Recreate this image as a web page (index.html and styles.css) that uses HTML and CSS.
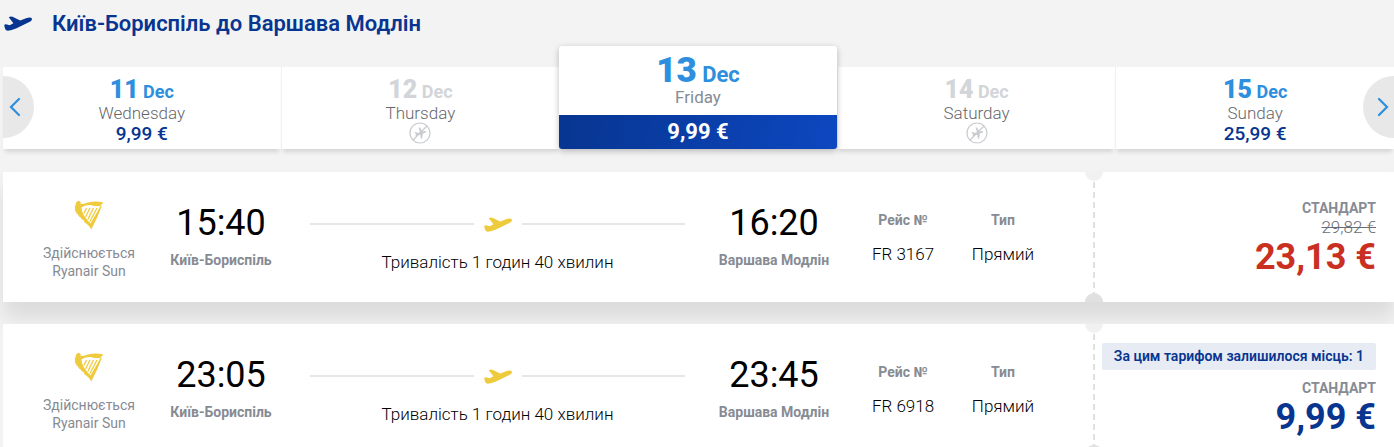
FILE: index.html
```html
<!DOCTYPE html>
<html lang="uk">

<head>
    <meta charset="UTF-8">
    <meta name="viewport" content="width=device-width, initial-scale=1.0">
    <title>Київ-Бориспіль до Варшава Модлін</title>
    <link rel="stylesheet" href="styles.css">
</head>

<body>

    <!-- shared icons -->
    <svg class="sprite" aria-hidden="true">
        <symbol id="plane" viewBox="0 0 28 15">
            <path d="M4.800 1.200 Q6.500 .2 8.500 .8 L16.200 4.600 L22.800 2 Q27 .8 28 2.700 Q28.200 4.800 24.800 6.300 L12 12.600 Q6.500 15 2.800 14.600 Q.9 14 .2 9 Q1.500 7.600 3 8.500 L5.700 9.200 L9.400 7.200 Z"/>
        </symbol>
        <symbol id="harp" viewBox="0 0 30 30">
            <path d="M2 3 Q2.500 .8 5 1 Q7.300 1.500 6.500 4 Q10 4 14 2.500 Q21 .3 29.500 2.500 Q28 3 28.500 4 Q27.500 4 27.500 5.200 Q26 5 26 6.300 Q20 6.300 16 5 Q11.500 5 7.600 7.300 Q7 14 16.500 23.500 L26.500 6 L27.800 6 Q24 17 17.300 29.500 Q15.500 25.500 11 22.500 Q9.500 21.500 9.800 20.300 Q6.500 19 6.700 17.500 Q4 16.500 4.300 14.800 Q1.500 13.500 2.300 12 Q0 10 1.200 8.500 Q0 6.500 1.400 5.500 Z"/>
            <path class="strings" d="M12.500 8 L9.800 13.500 M16 8 L11.600 17 M19.500 8 L13.800 19.500 M23 8 L15.800 21.800"/>
        </symbol>
        <symbol id="no-flight" viewBox="0 0 22 22">
            <g class="outline">
                <circle cx="11" cy="11" r="10"/>
                <path d="M18 4 L4 18"/>
            </g>
            <path d="M5.500 10.300 L7 10 L8.400 11 L11 10.300 L9.600 5.600 L11 5.400 L13.400 9.500 L16.500 9 Q18 9.200 16.800 10.400 L13.800 11.500 L13.200 16.500 L12 16.700 L11.200 12.600 L8.600 13 L7.300 14.300 L6.500 14.200 L7 12.200 Z"/>
        </symbol>
    </svg>

    <header class="route-title">
        <svg class="plane-icon"><use href="#plane"/></svg>
        <h1>Київ-Бориспіль до Варшава Модлін</h1>
    </header>

    <nav class="days">
        <button class="day">
            <span class="date"><b>11</b> Dec</span>
            <span class="weekday">Wednesday</span>
            <span class="day-price">9,99 €</span>
        </button>
        <button class="day disabled" disabled>
            <span class="date"><b>12</b> Dec</span>
            <span class="weekday">Thursday</span>
            <svg class="no-flight"><use href="#no-flight"/></svg>
        </button>
        <button class="day active">
            <span class="date"><b>13</b> Dec</span>
            <span class="weekday">Friday</span>
            <span class="day-price">9,99 €</span>
        </button>
        <button class="day disabled" disabled>
            <span class="date"><b>14</b> Dec</span>
            <span class="weekday">Saturday</span>
            <svg class="no-flight"><use href="#no-flight"/></svg>
        </button>
        <button class="day">
            <span class="date"><b>15</b> Dec</span>
            <span class="weekday">Sunday</span>
            <span class="day-price">25,99 €</span>
        </button>
        <button class="arrow prev" aria-label="Previous">
            <svg viewBox="0 0 12 20"><path d="M10 2 L2 10 L10 18"/></svg>
        </button>
        <button class="arrow next" aria-label="Next">
            <svg viewBox="0 0 12 20"><path d="M2 2 L10 10 L2 18"/></svg>
        </button>
    </nav>

    <main class="flights">
        <article class="flight raised">
            <div class="details">
                <div class="operator">
                    <svg class="harp"><use href="#harp"/></svg>
                    <p>Здійснюється<br>Ryanair Sun</p>
                </div>
                <div class="stop">
                    <time>15:40</time>
                    <span class="label">Київ-Бориспіль</span>
                </div>
                <div class="path">
                    <div class="line"><svg class="plane-icon"><use href="#plane"/></svg></div>
                    <p>Тривалість 1 годин 40 хвилин</p>
                </div>
                <div class="stop">
                    <time>16:20</time>
                    <span class="label">Варшава Модлін</span>
                </div>
                <div class="info number">
                    <span class="label">Рейс №</span>
                    <span>FR 3167</span>
                </div>
                <div class="info type">
                    <span class="label">Тип</span>
                    <span>Прямий</span>
                </div>
            </div>
            <div class="fare">
                <span class="fare-name">СТАНДАРТ</span>
                <del>29,82 €</del>
                <strong class="price sale">23,13 €</strong>
            </div>
        </article>

        <article class="flight">
            <div class="details">
                <div class="operator">
                    <svg class="harp"><use href="#harp"/></svg>
                    <p>Здійснюється<br>Ryanair Sun</p>
                </div>
                <div class="stop">
                    <time>23:05</time>
                    <span class="label">Київ-Бориспіль</span>
                </div>
                <div class="path">
                    <div class="line"><svg class="plane-icon"><use href="#plane"/></svg></div>
                    <p>Тривалість 1 годин 40 хвилин</p>
                </div>
                <div class="stop">
                    <time>23:45</time>
                    <span class="label">Варшава Модлін</span>
                </div>
                <div class="info number">
                    <span class="label">Рейс №</span>
                    <span>FR 6918</span>
                </div>
                <div class="info type">
                    <span class="label">Тип</span>
                    <span>Прямий</span>
                </div>
            </div>
            <div class="fare">
                <span class="seats-left">За цим тарифом залишилося місць: 1</span>
                <span class="fare-name">СТАНДАРТ</span>
                <strong class="price">9,99 €</strong>
            </div>
        </article>
    </main>

</body>

</html>
```

FILE: styles.css
```css
*{
    padding: 0;
    margin: 0;
    box-sizing: border-box;
}
body{
    height: 100vh;
    overflow: hidden;
    padding-left: 3px;
    background-color: #f3f3f3;
    font-family: Roboto, "Liberation Sans", sans-serif;
    font-size: 17px;
    color: #000;
}
button{
    border: 0;
    font: inherit;
    cursor: pointer;
}
.sprite{
    position: absolute;
    width: 0;
    height: 0;
}
.plane-icon{
    width: 28px;
    height: 15px;
    flex: none;
}

/* title */
.route-title{
    display: flex;
    align-items: center;
    gap: 20px;
    height: 46px;
    padding-left: 1px;
    color: #073590;
}
.route-title .plane-icon{
    fill: #073590;
}
.route-title h1{
    font-size: 22px;
    font-weight: 600;
}

/* dates */
.days{
    position: relative;
    display: flex;
    align-items: flex-end;
}
.day{
    flex: 1;
    display: flex;
    flex-direction: column;
    align-items: center;
    height: 82px;
    padding-top: 9px;
    background-color: #fff;
    box-shadow: 0 5px 4px -2px rgba(0,0,0,.12);
}
.day + .day{
    border-left: 1px solid #f0f0f0;
}
.date{
    font-size: 18px;
    line-height: 20px;
    font-weight: 700;
    color: #2d8fdd;
}
.date b{
    font-size: 25px;
    line-height: 28px;
}
.weekday{
    font-size: 17px;
    line-height: 18px;
    font-weight: 300;
    color: #66686d;
}
.day-price{
    font-size: 19px;
    line-height: 24px;
    font-weight: 500;
    color: #073590;
}
.disabled .date{
    color: #d2d5d9;
}
.no-flight{
    width: 22px;
    height: 22px;
    fill: #c8cbcf;
}
.outline{
    fill: none;
    stroke: #c8cbcf;
    stroke-width: 1.2;
}
.day.active{
    position: relative;
    height: 103px;
    padding-top: 8px;
    border: 0;
    border-radius: 3px;
    box-shadow: 0 2px 6px rgba(0,0,0,.25);
    overflow: hidden;
}
.active .date{
    font-size: 22px;
    line-height: 24px;
}
.active .date b{
    font-size: 35px;
    line-height: 34px;
}
.active .weekday{
    font-weight: 400;
    color: #868b94;
}
.active .day-price{
    width: 100%;
    margin-top: auto;
    font-size: 22px;
    line-height: 34px;
    font-weight: 700;
    color: #fff;
    background: linear-gradient(100deg, #073590, #0d47c0);
}
.arrow{
    position: absolute;
    bottom: 11px;
    width: 31px;
    height: 62px;
    display: flex;
    align-items: center;
    background-color: #e8e8e8;
}
.arrow svg{
    width: 12px;
    height: 20px;
    fill: none;
    stroke: #2d8fdd;
    stroke-width: 2.2;
    stroke-linecap: round;
}
.prev{
    left: 0;
    padding-left: 6px;
    border-radius: 0 31px 31px 0;
}
.next{
    right: 0;
    justify-content: flex-end;
    padding-right: 5px;
    border-radius: 31px 0 0 31px;
}

/* flights */
.flights{
    display: grid;
    gap: 22px;
    padding-top: 23px;
}
.flight{
    position: relative;
    display: flex;
    height: 130px;
    background-color: #fff;
}
.raised{
    box-shadow: 0 16px 20px rgba(0,0,0,.1);
}
.details{
    flex: 1;
    display: flex;
    padding: 28px 54px 0 19px;
    text-align: center;
}
.label{
    font-size: 14px;
    line-height: 20px;
    font-weight: 700;
    color: #868b94;
}
.operator{
    width: 134px;
    font-size: 14px;
    line-height: 18px;
    color: #868b94;
}
.harp{
    display: block;
    width: 30px;
    height: 30px;
    margin: 0 auto 14px;
    fill: #eecb3d;
}
.strings{
    fill: none;
    stroke: #eecb3d;
    stroke-width: 1.3;
}
.stop{
    width: 130px;
    display: flex;
    flex-direction: column;
}
.stop time{
    font-size: 36px;
    line-height: 46px;
    margin-bottom: 4px;
}
.path{
    flex: 1;
    margin: 15px 24px 0;
}
.line{
    display: flex;
    align-items: center;
    gap: 10px;
    height: 18px;
    margin-bottom: 19px;
}
.line::before,
.line::after{
    content: "";
    flex: 1;
    height: 2px;
    background-color: #e7e7e7;
}
.line .plane-icon{
    fill: #eecb3d;
}
.path p{
    line-height: 20px;
    font-weight: 300;
}
.info{
    display: flex;
    flex-direction: column;
    gap: 14px;
    padding-top: 10px;
    line-height: 20px;
    font-weight: 300;
}
.number{
    width: 128px;
}
.type{
    width: 72px;
}

/* fare */
.fare{
    position: relative;
    width: 301px;
    display: flex;
    flex-direction: column;
    justify-content: center;
    align-items: flex-end;
    padding: 2px 18px 0 0;
    background: repeating-linear-gradient(#e0e0e0 0 6px, #fff 6px 10px) left / 2px 100% no-repeat;
}
.fare::before,
.fare::after{
    content: "";
    position: absolute;
    left: -8px;
    width: 18px;
    height: 9px;
    background-color: #f1f1f1;
}
.fare::before{
    top: 0;
    border-radius: 0 0 9px 9px;
}
.fare::after{
    bottom: 0;
    border-radius: 9px 9px 0 0;
    background-color: #e0e0e0;
}
.fare-name{
    font-size: 14px;
    line-height: 18px;
    font-weight: 700;
    color: #868b94;
}
.fare del{
    line-height: 20px;
    font-weight: 300;
    color: #686d76;
}
.price{
    font-size: 36px;
    line-height: 40px;
    color: #073590;
}
.sale{
    color: #c93022;
}
.seats-left{
    margin-bottom: 9px;
    padding: 0 12px;
    font-size: 14px;
    line-height: 27px;
    font-weight: 600;
    color: #073590;
    background-color: #e6ebf4;
    border-radius: 2px;
}
```
